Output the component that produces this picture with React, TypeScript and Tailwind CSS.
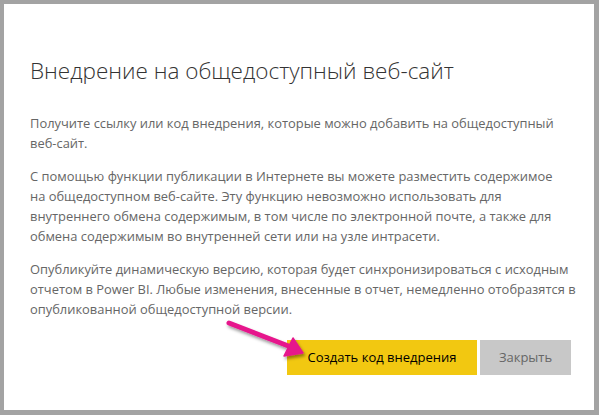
import React from "react";

const font = { fontFamily: '"Open Sans", "Noto Sans", sans-serif' };

const PARAGRAPHS = [
  ["Получите ссылку или код внедрения, которые можно добавить на общедоступный", "веб-сайт."],
  [
    "С помощью функции публикации в Интернете вы можете разместить содержимое",
    "на общедоступном веб-сайте. Эту функцию невозможно использовать для",
    "внутреннего обмена содержимым, в том числе по электронной почте, а также для",
    "обмена содержимым во внутренней сети или на узле интрасети.",
  ],
  [
    "Опубликуйте динамическую версию, которая будет синхронизироваться с исходным",
    "отчетом в Power BI. Любые изменения, внесенные в отчет, немедленно отобразятся в",
    "опубликованной общедоступной версии.",
  ],
];

function Arrow() {
  return (
    <svg
      className="pointer-events-none absolute left-[211px] top-[301px]"
      width="100"
      height="62"
      viewBox="0 0 100 62"
    >
      <defs>
        <filter id="sh" x="-20%" y="-30%" width="150%" height="180%">
          <feDropShadow dx="1.5" dy="2.5" stdDeviation="1.5" floodColor="#000" floodOpacity="0.4" />
        </filter>
      </defs>
      <g filter="url(#sh)" fill="#e6168c" stroke="#e6168c">
        <line x1="14" y1="18" x2="76" y2="42" strokeWidth="5" strokeLinecap="round" />
        <polygon points="78,33 88,48 69,51" strokeWidth="1.5" strokeLinejoin="round" />
      </g>
    </svg>
  );
}

export default function App() {
  return (
    <div className="h-[415px] w-[599px] bg-[#a3a3a3] pb-[5px] pl-[4px] pr-[5px] pt-[4px]" style={font}>
      <div className="relative flex h-full flex-col bg-white pl-[26px] pr-[20px]">
        <h1 className="mt-[52px] text-[22.5px] font-light leading-[30px] text-[#333333]">
          Внедрение на общедоступный веб-сайт
        </h1>

        <div className="mt-[27px] space-y-[13px] text-[12.9px] leading-[20px] text-[#666666]">
          {PARAGRAPHS.map((lines, i) => (
            <p key={i}>
              {lines.map((line) => (
                <span key={line} className="block whitespace-nowrap">
                  {line}
                </span>
              ))}
            </p>
          ))}
        </div>

        <div className="mt-[21px] flex justify-end gap-[3px] pr-[3px]">
          <button className="h-[35px] w-[190px] bg-[#f2c811] text-[13px] text-black">
            Создать код внедрения
          </button>
          <button className="h-[35px] w-[91px] bg-[#c8c8c8] text-[13px] text-[#666666]">
            Закрыть
          </button>
        </div>

        <Arrow />
      </div>
    </div>
  );
}
